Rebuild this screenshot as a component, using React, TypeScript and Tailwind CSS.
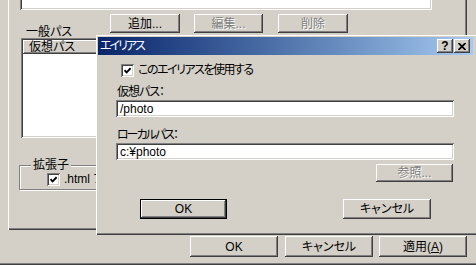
import React from 'react';

const raised =
  'shadow-[inset_-1px_-1px_0_#404040,inset_1px_1px_0_#ffffff,inset_-2px_-2px_0_#808080,inset_2px_2px_0_#d4d0c8]';
const sunken =
  'shadow-[inset_1px_1px_0_#808080,inset_-1px_-1px_0_#ffffff,inset_2px_2px_0_#404040,inset_-2px_-2px_0_#d4d0c8]';

type BtnProps = {
  label: React.ReactNode;
  className: string;
  disabled?: boolean;
  isDefault?: boolean;
};

const Btn = ({ label, className, disabled, isDefault }: BtnProps) => (
  <div
    className={`${className} shrink-0 flex items-center justify-center bg-[#d4d0c8] text-[12px] leading-[12px] ${raised} ${
      isDefault ? 'border border-black' : ''
    } ${disabled ? 'text-[#808080] [text-shadow:1px_1px_0_#ffffff]' : 'text-black'}`}
  >
    {label}
  </div>
);

const Check = () => (
  <div className={`w-[13px] h-[13px] shrink-0 bg-white flex items-center justify-center ${sunken}`}>
    <svg width="7" height="7" viewBox="0 0 7 7">
      <path d="M0.5 3.2 L2.6 5.3 L6.6 1.2" stroke="#000" strokeWidth="1.9" fill="none" />
    </svg>
  </div>
);

const TextBox = ({ value }: { value: string }) => (
  <div className={`ml-[18px] w-[338px] h-[17px] bg-white flex items-center pl-[4px] text-[12px] leading-[12px] ${sunken}`}>
    {value}
  </div>
);

export default function App() {
  return (
    <div className="relative w-[476px] h-[265px] overflow-hidden bg-[#d4d0c8] text-black font-['Liberation_Sans','Noto_Sans_CJK_JP',sans-serif] [font-feature-settings:'palt']">
      {/* property page underneath */}
      <div className="ml-[8px] w-[459px] h-[230px] border-l border-white shadow-[inset_-1px_-1px_0_#404040,inset_-2px_-2px_0_#808080] flex flex-col">
        <div className={`-mt-[2px] ml-[11px] w-[412px] h-[12px] bg-white ${sunken}`} />

        <div className="mt-[4px] flex h-[19px]">
          <div className="ml-[17px] w-[84px] mt-[12px] text-[12px] leading-[12px] whitespace-nowrap">一般パス</div>
          <Btn label="追加..." className="w-[70px] h-[19px]" />
          <Btn label="編集..." className="ml-[14px] w-[69px] h-[19px]" disabled />
          <Btn label="削除" className="ml-[15px] w-[70px] h-[19px]" disabled />
        </div>

        <div className={`mt-[5px] ml-[12px] w-[200px] h-[100px] bg-white p-[2px] ${sunken}`}>
          <div className={`h-[14px] flex items-center pl-[6px] text-[12px] leading-[12px] bg-[#d4d0c8] ${raised}`}>
            仮想パス
          </div>
        </div>

        <div className="relative mt-[27px] ml-[10px] w-[200px] h-[25px] border border-[#808080] shadow-[1px_1px_0_#ffffff,inset_1px_1px_0_#ffffff]">
          <div className="absolute -top-[7px] left-[11px] px-[2px] bg-[#d4d0c8] text-[12px] leading-[12px]">拡張子</div>
          <div className="ml-[27px] mt-[7px] flex items-center gap-[4px]">
            <Check />
            <span className="text-[12px] leading-[13px] whitespace-nowrap">.html ファイル</span>
          </div>
        </div>
      </div>

      <div className="mt-[6px] flex">
        <Btn label="OK" className="ml-[190px] w-[88px] h-[21px]" />
        <Btn label="キャンセル" className="ml-[7px] w-[88px] h-[21px]" />
        <Btn
          label={
            <span>
              適用(<span className="underline underline-offset-1">A</span>)
            </span>
          }
          className="ml-[6px] w-[88px] h-[21px]"
        />
      </div>
      <div className="mt-[6px] h-[2px] border-t border-[#808080] bg-[#404040]" />

      {/* alias dialog */}
      <div className="absolute left-[96px] top-[35px] w-[382px] h-[200px] bg-[#d4d0c8] pt-[2px] pl-[2px] shadow-[inset_1px_1px_0_#ffffff,inset_-1px_-1px_0_#404040,inset_-2px_-2px_0_#808080] flex flex-col">
        <div className="w-[375px] h-[18px] flex items-center bg-gradient-to-r from-[#0a246a] to-[#a6caf0]">
          <span className="pl-[2px] text-white text-[12px] leading-[12px] tracking-[-2px]">エイリアス</span>
          <div className="ml-auto mr-[3px] flex gap-[1px]">
            <div className={`w-[16px] h-[14px] bg-[#d4d0c8] flex items-center justify-center text-[12px] leading-[12px] font-bold ${raised}`}>
              ?
            </div>
            <div className={`w-[16px] h-[14px] bg-[#d4d0c8] flex items-center justify-center ${raised}`}>
              <svg width="8" height="7" viewBox="0 0 8 7">
                <path d="M0.5 0 L7.5 7 M7.5 0 L0.5 7" stroke="#000" strokeWidth="1.8" fill="none" />
              </svg>
            </div>
          </div>
        </div>

        <div className="mt-[9px] ml-[23px] flex items-center gap-[4px]">
          <Check />
          <span className="text-[12px] leading-[13px] whitespace-nowrap tracking-[-1.5px]">このエイリアスを使用する</span>
        </div>

        <div className="mt-[9px] ml-[19px] text-[12px] leading-[12px] tracking-[-1px]">仮想パス：</div>
        <div className="mt-[2px]">
          <TextBox value="/photo" />
        </div>

        <div className="mt-[12px] ml-[19px] text-[12px] leading-[12px] tracking-[-2px]">ローカルパス：</div>
        <div className="mt-[2px]">
          <TextBox value="c:¥photo" />
        </div>

        <div className="mt-[4px] flex">
          <Btn label="参照..." className="ml-[278px] w-[77px] h-[18px]" disabled />
        </div>

        <div className="mt-[17px] flex">
          <Btn label="OK" className="ml-[42px] w-[87px] h-[20px]" isDefault />
          <Btn label="キャンセル" className="ml-[116px] w-[88px] h-[20px]" />
        </div>
      </div>
    </div>
  );
}
